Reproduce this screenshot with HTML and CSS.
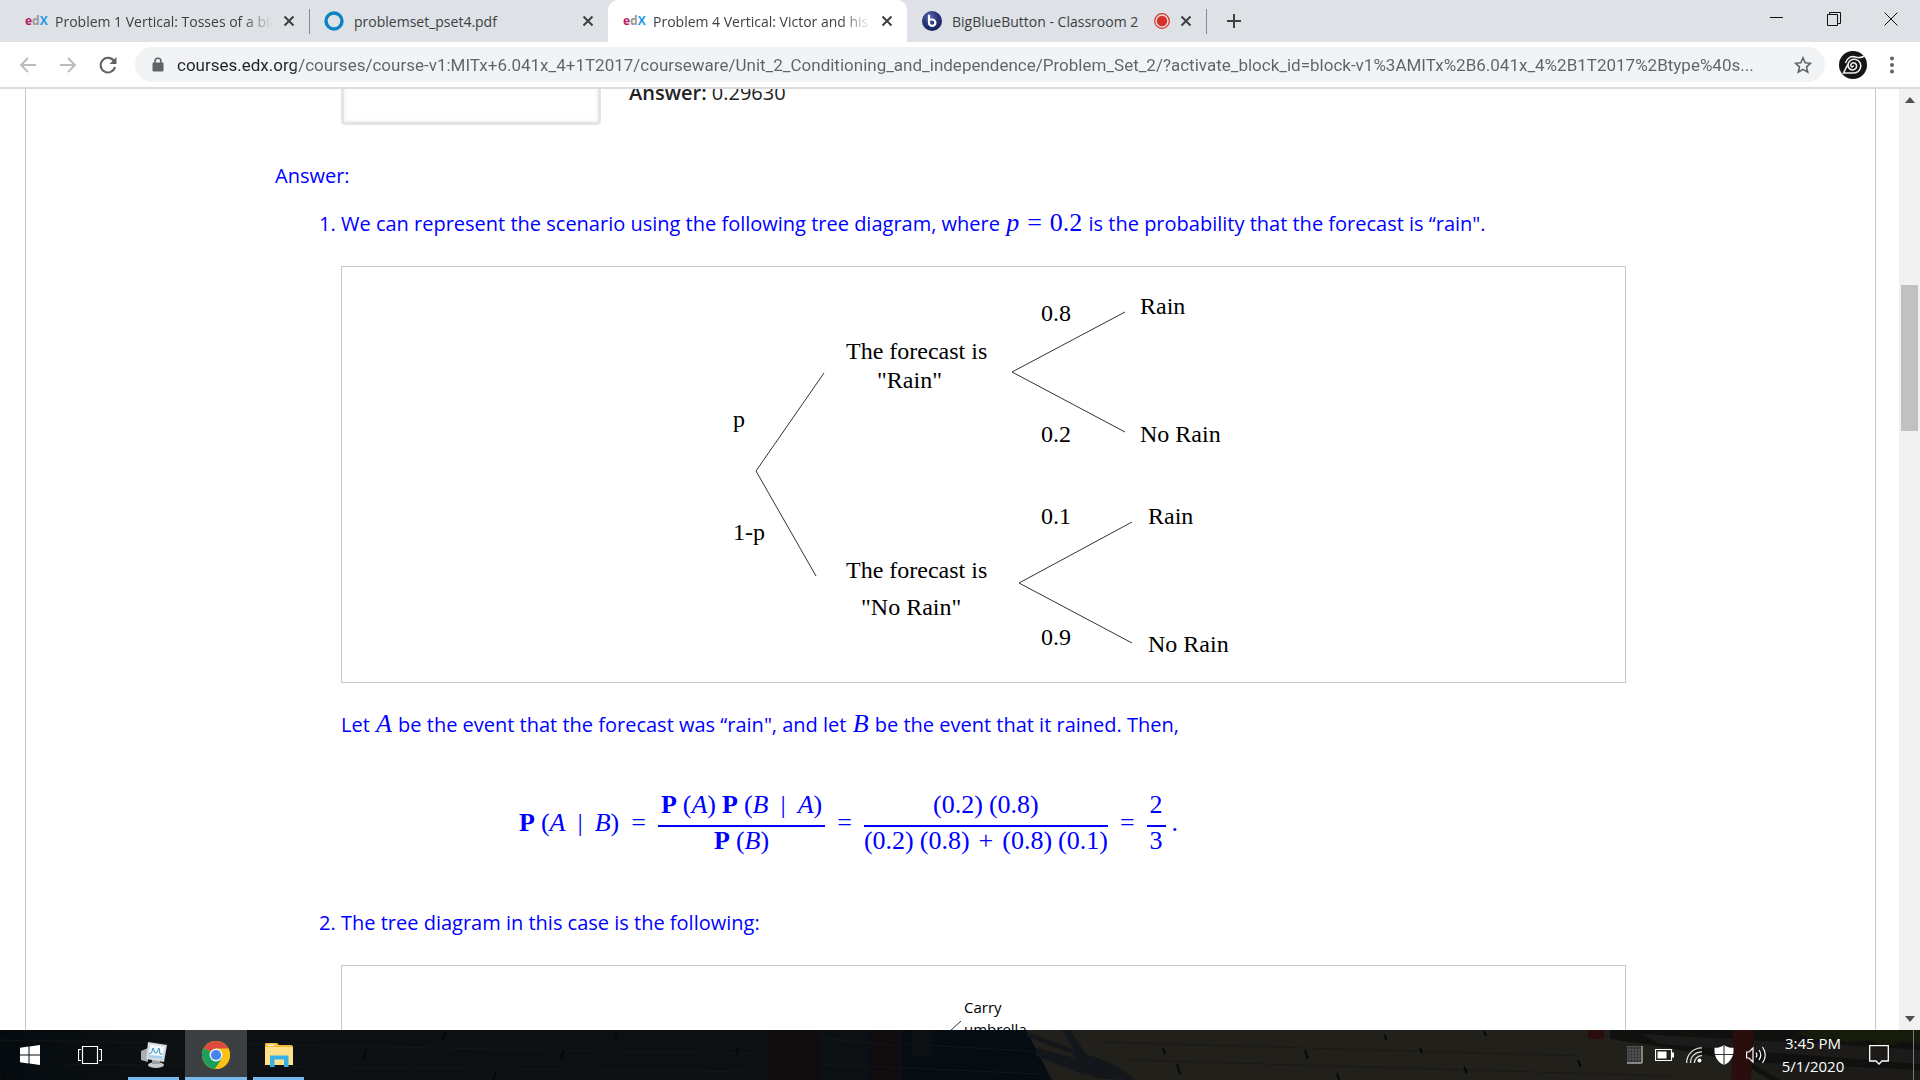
FILE: index.html
```html
<!DOCTYPE html>
<html lang="en">
<head>
<meta charset="utf-8">
<title>Problem 4 Vertical: Victor and his umbrella</title>
<link rel="stylesheet" href="styles.css">
</head>
<body>
<header class="browser">
  <div class="tabstrip">
    <div class="tab">
      <span class="edx"><b class="edx-e">e</b><b class="edx-d">d</b><b class="edx-x">X</b></span>
      <span class="tab-title fade">Problem 1 Vertical: Tosses of a biased coin</span>
      <button class="tab-close" aria-label="Close tab"><svg width="12" height="12" viewBox="0 0 12 12"><path d="M1.5 1.5l9 9M10.5 1.5l-9 9"/></svg></button>
    </div>
    <div class="tab divided">
      <svg class="favicon" width="20" height="20" viewBox="0 0 20 20"><circle cx="10" cy="10" r="8" fill="none" stroke="#0a85c2" stroke-width="3.4"/></svg>
      <span class="tab-title">problemset_pset4.pdf</span>
      <button class="tab-close" aria-label="Close tab"><svg width="12" height="12" viewBox="0 0 12 12"><path d="M1.5 1.5l9 9M10.5 1.5l-9 9"/></svg></button>
    </div>
    <div class="tab active">
      <span class="edx"><b class="edx-e">e</b><b class="edx-d">d</b><b class="edx-x">X</b></span>
      <span class="tab-title fade">Problem 4 Vertical: Victor and his umbrella</span>
      <button class="tab-close" aria-label="Close tab"><svg width="12" height="12" viewBox="0 0 12 12"><path d="M1.5 1.5l9 9M10.5 1.5l-9 9"/></svg></button>
    </div>
    <div class="tab">
      <svg class="favicon" width="20" height="20" viewBox="0 0 20 20"><defs><radialGradient id="bbb" cx=".4" cy=".3" r=".8"><stop offset="0" stop-color="#5a68b0"/><stop offset=".5" stop-color="#273379"/><stop offset="1" stop-color="#182058"/></radialGradient></defs><circle cx="10" cy="10" r="10" fill="url(#bbb)"/><path d="M7 4.5v7.2a3.2 3.2 0 1 0 3.2-3.2H7" fill="none" stroke="#fff" stroke-width="2.2" stroke-linecap="round"/></svg>
      <span class="tab-title">BigBlueButton - Classroom 2</span>
      <svg class="recording" width="16" height="16" viewBox="0 0 16 16"><circle cx="8" cy="8" r="7.3" fill="none" stroke="#d93025" stroke-width="1.2"/><circle cx="8" cy="8" r="5.2" fill="#d93025"/></svg>
      <button class="tab-close" aria-label="Close tab"><svg width="12" height="12" viewBox="0 0 12 12"><path d="M1.5 1.5l9 9M10.5 1.5l-9 9"/></svg></button>
    </div>
    <button class="new-tab" aria-label="New tab"><svg width="16" height="16" viewBox="0 0 16 16"><path d="M8 1v14M1 8h14" stroke="#3c4043" stroke-width="2"/></svg></button>
    <div class="window-controls">
      <button aria-label="Minimize"><svg width="14" height="14" viewBox="0 0 14 14"><path d="M0 5.5h13"/></svg></button>
      <button aria-label="Restore"><svg width="14" height="14" viewBox="0 0 14 14"><path d="M.5 2.5h10v11H.5zM2.500 2V.5h11v11H11"/></svg></button>
      <button aria-label="Close"><svg width="14" height="14" viewBox="0 0 14 14"><path d="M.5.5l13 13M13.500.5l-13 13"/></svg></button>
    </div>
  </div>
  <div class="toolbar">
    <button class="nav" aria-label="Back"><svg width="18" height="18" viewBox="0 0 18 18"><path d="M17 9H2.500M9 2L2 9l7 7" fill="none" stroke="#babcbe" stroke-width="2"/></svg></button>
    <button class="nav" aria-label="Forward"><svg width="18" height="18" viewBox="0 0 18 18"><path d="M1 9h14.500M9 2l7 7-7 7" fill="none" stroke="#babcbe" stroke-width="2"/></svg></button>
    <button class="nav" aria-label="Reload"><svg width="18" height="18" viewBox="0 0 18 18"><path d="M15.300 5.500A7.300 7.300 0 1 0 16 11" fill="none" stroke="#5f6368" stroke-width="2.100"/><path d="M17.500 1v7h-7z" fill="#5f6368"/></svg></button>
    <div class="omnibox">
      <svg width="12" height="16" viewBox="0 0 12 16"><path d="M3 6V4.200a3 3 0 0 1 6 0V6" fill="none" stroke="#5f6368" stroke-width="1.600"/><rect x=".5" y="5.500" width="11" height="9" rx="1.200" fill="#5f6368"/></svg>
      <input class="url" type="text" aria-label="Address" value="courses.edx.org/courses/course-v1:MITx+6.041x_4+1T2017/courseware/Unit_2_Conditioning_and_independence/Problem_Set_2/?activate_block_id=block-v1%3AMITx%2B6.041x_4%2B1T2017%2Btype%40s...">
      <button class="star" aria-label="Bookmark this page"><svg width="18" height="18" viewBox="0 0 18 18"><path d="M9 1.800l2.200 5 5.300.5-4 3.600 1.200 5.300L9 13.400l-4.700 2.800 1.200-5.300-4-3.600 5.300-.5z" fill="none" stroke="#5f6368" stroke-width="1.600"/></svg></button>
    </div>
    <button class="avatar" aria-label="Profile"><svg width="28" height="28" viewBox="0 0 28 28"><circle cx="14" cy="14" r="14" fill="#151515"/><path d="M14 14.500c.800 1.500-1.700 2-2.100.2-.5-2.200 2.200-3.700 4.200-2.500 2.400 1.500 1.800 5.300-.9 6.400-3.200 1.200-6.300-1.300-6.200-4.500.1-4 4-6.500 7.800-5.600 4 1 6 5.200 4.400 9-1.200 3-3.800 4.500-7 4.500H4.500L9 13" fill="none" stroke="#eee" stroke-width="1.600"/><path d="M6.500 12C8 7 12 4.800 16.500 6c2.500.8 5 1.500 9-1" fill="none" stroke="#eee" stroke-width="1.600"/></svg></button>
    <button class="menu" aria-label="Menu"><svg width="6" height="18" viewBox="0 0 6 18"><g fill="#5f6368"><circle cx="3" cy="2.500" r="2"/><circle cx="3" cy="9" r="2"/><circle cx="3" cy="15.500" r="2"/></g></svg></button>
  </div>
</header>

<div class="viewport">
  <main class="sheet">
    <div class="response">
      <input class="response-input" type="text" aria-label="Response">
      <p><b>Answer:</b> 0.29630</p>
    </div>
    <section class="solution">
      <p>Answer:</p>
      <ol class="steps">
        <li>
          <p>We can represent the scenario using the following tree diagram, where <span class="math relation"><i>p</i><span>=</span><span>0.2</span></span> is the probability that the forecast is “rain".</p>
          <figure class="figure">
            <svg width="600" height="415" viewBox="0 0 600 415" role="img" aria-label="Forecast tree">
              <g fill="none" stroke="#333" stroke-width="1">
                <path d="M140 106L72 204L132 309"/>
                <path d="M441 45L328 105L441 165"/>
                <path d="M448 255L335 316L448 376"/>
              </g>
              <g class="tree-text">
                <text x="49" y="160">p</text>
                <text x="49" y="273">1-p</text>
                <text x="162" y="92">The forecast is</text>
                <text x="193" y="121">"Rain"</text>
                <text x="162" y="311">The forecast is</text>
                <text x="177" y="348">"No Rain"</text>
                <text x="357" y="54">0.8</text>
                <text x="357" y="175">0.2</text>
                <text x="357" y="257">0.1</text>
                <text x="357" y="378">0.9</text>
                <text x="456" y="47">Rain</text>
                <text x="456" y="175">No Rain</text>
                <text x="464" y="257">Rain</text>
                <text x="464" y="385">No Rain</text>
              </g>
            </svg>
          </figure>
          <p>Let <i class="math">A</i> be the event that the forecast was “rain", and let <i class="math">B</i> be the event that it rained. Then,</p>
          <div class="equation">
            <span class="term"><b>P</b><span>(<i>A</i><span class="operator">|</span><i>B</i>)</span></span>
            <span>=</span>
            <span class="fraction">
              <span class="numerator term"><b>P</b><span>(<i>A</i>)</span><b>P</b><span>(<i>B</i><span class="operator">|</span><i>A</i>)</span></span>
              <span class="term"><b>P</b><span>(<i>B</i>)</span></span>
            </span>
            <span>=</span>
            <span class="fraction">
              <span class="numerator term"><span>(0.2)</span><span>(0.8)</span></span>
              <span class="term"><span>(0.2)</span><span>(0.8)</span><span class="plus">+</span><span>(0.8)</span><span>(0.1)</span></span>
            </span>
            <span>=</span>
            <span class="term"><span class="fraction"><span class="numerator">2</span><span>3</span></span>.</span>
          </div>
        </li>
        <li>
          <p>The tree diagram in this case is the following:</p>
          <figure class="figure">
            <svg width="600" height="415" viewBox="0 0 600 415" role="img" aria-label="Umbrella tree">
              <path d="M277 55L266 65L200 150" fill="none" stroke="#333"/>
              <g class="leaf-text">
                <text x="280" y="47">Carry</text>
                <text x="280" y="69">umbrella</text>
              </g>
            </svg>
          </figure>
        </li>
      </ol>
    </section>
  </main>
  <div class="scrollbar" aria-hidden="true">
    <svg width="10" height="6" viewBox="0 0 10 6"><path d="M0 6l5-6 5 6z" fill="#505050"/></svg>
    <div class="track"><div class="thumb"></div></div>
    <svg width="10" height="6" viewBox="0 0 10 6"><path d="M0 0l5 6 5-6z" fill="#505050"/></svg>
  </div>
</div>

<footer class="taskbar">
  <svg class="wallpaper" viewBox="0 0 1920 50" preserveAspectRatio="none" aria-hidden="true">
    <defs><linearGradient id="night"><stop offset="0" stop-color="#050b0f"/><stop offset=".15" stop-color="#0c1013"/><stop offset="1" stop-color="#0b1014"/></linearGradient></defs>
    <rect width="1100" height="50" fill="url(#night)"/>
    <path d="M902 0h128l20 50H902z" fill="#050c12"/>
    <path d="M769 0h50v50h-50zM870 0h28v50h-28z" fill="#100b0c"/>
    <path d="M912 0h20v26h-20z" fill="#0e0f11"/>
    <path d="M1026 0h894v50h-868z" fill="#22201b"/>
    <path d="M1026 6l46 18 22 24 30 2h12l-22-16-28-10-16-24h-8l12 20-46-18zM1036 26l46 18 24 2-24-16-46-12z" fill="#13161a"/>
    <path d="M1610 0h310v50h-150l-30-18-70-14-60-9z" fill="#10100f"/>
    <path d="M1640 4l220 12 60 4v14l-260-20zM1750 32l170 8v10h-140z" fill="#1c1b1a"/>
    <path d="M1588 0h16v9h-16zM1733 0h21l-3 50h-20z" fill="#2a0e0d"/>
    <path d="M1796 2l22-2h102v14l-18-3-16 6-18-7-20 3-18-5-18 2z" fill="#151c0c"/>
    <g fill="none" stroke="#12171a" stroke-width="1"><path d="M0 10l770 14M60 34l700 8M820 8l80 8M905 14l140 8M820 34l220 10"/></g>
    <g fill="none" stroke="#1b1a15"><path d="M1100 12l480 14M1130 30l540 16"/></g>
    <g fill="none" stroke="#060808" stroke-width="2"><path d="M446 2l-4 8M367 19l-4 9M564 20l-3 8M496 42l-3 8M7 42l-5 6M616 2l-1 6M738 18l-2 8M1163 18l2 6M1177 34l3 10M1305 20l3 9M1385 5l1 5M1484 1l2 5M1420 18l2 5M1578 30l3 7M1464 37l3 6M1337 43l2 7"/></g>
  </svg>
  <nav class="apps" aria-label="Taskbar">
    <button aria-label="Start"><svg width="20" height="20" viewBox="0 0 20 20"><path d="M0 2.800l8.500-1.200v7.900H0zM9.500 1.500L20 0v9.500H9.500zM0 10.500h8.500v7.900L0 17.200zM9.500 10.500H20V20L9.500 18.500z" fill="#fff"/></svg></button>
    <button aria-label="Task View"><svg width="24" height="18" viewBox="0 0 24 18"><path d="M4.500.500h15v17h-15zM3 3.500H.500v11H3M21 3.500h2.500v11H21" fill="none" stroke="#fff" stroke-width="1.200"/></svg></button>
    <button class="open" aria-label="Resource Monitor"><svg width="28" height="26" viewBox="0 0 28 26"><path d="M1 9l7-3v14l-7-2z" fill="#a9adb0"/><ellipse cx="16" cy="23" rx="8" ry="3" fill="#c8cacb"/><path d="M12 17h8v5h-8z" fill="#9b9fa1"/><path d="M8 0l19 3-3 17-18-3z" fill="#d6d8d9"/><path d="M10 2.500l14.500 2.300-2.300 12.400L8.500 15z" fill="#f3f9fd"/><path d="M8.700 12l2.800-1 1.500-5 2 5 2-.5L19 6l1 6 2.500 0" fill="none" stroke="#3e93c7" stroke-width="1"/><path d="M9 13l13.500 1-.5 3L8.500 15z" fill="#9fcdeb"/></svg></button>
    <button class="open current" aria-label="Chrome"><svg width="28" height="28" viewBox="0 0 28 28"><circle cx="14" cy="14" r="14" fill="#fbc116"/><path d="M14 14L1.900 7A14 14 0 0 1 26.100 7z" fill="#dc4a3c"/><path d="M26.100 7H14v7z" fill="#dc4a3c"/><path d="M1.900 7A14 14 0 0 0 13 27.960L20 17.500 14 14z" fill="#1a9f5c"/><path d="M13 28l7-10.500L14 14l13.900-1A14 14 0 0 1 13 28z" fill="#fbc116"/><path d="M14 14V7.500h12.400A14 14 0 0 1 28 14z" fill="#fbc116"/><circle cx="14" cy="14" r="6.500" fill="#f4f4f4"/><circle cx="14" cy="14" r="5.100" fill="#4485f0"/></svg></button>
    <button class="open" aria-label="File Explorer"><svg width="28" height="24" viewBox="0 0 28 24"><path d="M0 1a1 1 0 0 1 1-1h11l2 2h12a2 2 0 0 1 2 2v18H0z" fill="#f5b82e"/><path d="M0 4h28v18H0z" fill="#ffe08a"/><path d="M2.500 1.500h7V3h-7z" fill="#e9f8ff"/><path d="M5 12.500h18.500V24H19v-7.500h-9.500V24H5z" fill="#35b1e6"/></svg></button>
  </nav>
  <div class="tray">
    <svg width="16" height="18" viewBox="0 0 16 18"><path d="M0 0h15v17H0z" fill="#2b2b2b" stroke="#777"/><path d="M3 1v16M6 1v16M9 1v16M12 1v16M1 4h13M1 7h13M1 10h13M1 13h13" stroke="#666" stroke-width=".8"/><path d="M15 0v17H0" fill="none" stroke="#bbb"/></svg>
    <svg width="19" height="12" viewBox="0 0 19 12"><path d="M.500.500h16v11H.500z" fill="none" stroke="#fff" stroke-width="1.200"/><path d="M2.500 2.500h9v7h-9zM17 3.500h2v5h-2z" fill="#fff"/></svg>
    <svg width="16" height="16" viewBox="0 0 16 16"><g fill="none" stroke="#ddd" stroke-width="1.300"><path d="M.7 16A15 15 0 0 1 16 .8M4.500 16A11 11 0 0 1 16 4.800M8.300 16A7.500 7.500 0 0 1 16 8.600"/></g><circle cx="13.500" cy="13.500" r="2" fill="#fff"/></svg>
    <svg width="20" height="20" viewBox="0 0 20 20"><path d="M10 0c2.500 2 6 3 9.500 2.800C20 11 17 17 10 20 3 17 0 11 .500 2.800 4 3 7.500 2 10 0z" fill="#fff"/><path d="M10 0v20M0 9.500h20" stroke="#333" stroke-width="1.100"/></svg>
    <svg width="21" height="18" viewBox="0 0 21 18"><g fill="none" stroke="#fff" stroke-width="1.200"><path d="M.600 6H3l4-4v14l-4-4H.600z"/><path d="M10 6.500q1.800 2.500 0 5" /><path d="M13 4q3.500 5 0 10"/><path d="M16.500 1q5.500 8 0 16"/></g></svg>
    <button class="clock"><time>3:45 PM</time><time>5/1/2020</time></button>
    <button class="notes" aria-label="Notifications"><svg width="20" height="20" viewBox="0 0 20 20"><path d="M.700.700h18.600v15.300H13l-3 3-3-3H.700z" fill="none" stroke="#fff" stroke-width="1.300"/></svg></button>
  </div>
</footer>
</body>
</html>
```
FILE: styles.css
```css
* { box-sizing: border-box; }

body {
  margin: 0;
  height: 100vh;
  display: flex;
  flex-direction: column;
  overflow: hidden;
  background: #fff;
  font-family: "Open Sans", "Noto Sans", sans-serif;
}

p, figure, ol { margin: 0; }

button {
  display: flex;
  align-items: center;
  justify-content: center;
  padding: 0;
  border: 0;
  background: none;
  font: inherit;
  color: inherit;
}

svg { display: block; flex: none; }

/* Browser frame */
.tabstrip {
  display: flex;
  align-items: stretch;
  height: 42px;
  padding: 0 1px 0 10px;
  background: #dee1e6;
  color: #3c4043;
}

.tab {
  position: relative;
  display: flex;
  align-items: center;
  gap: 10px;
  width: 299px;
  padding: 0 14px 0 15px;
  font-size: 14px;
}

.tab.divided::before,
.new-tab::before {
  content: "";
  position: absolute;
  left: 0;
  top: 9px;
  width: 1px;
  height: 25px;
  background: #85888c;
}

.tab.active {
  background: #fff;
  border-radius: 10px 10px 0 0;
}

.tab-title {
  flex: 1;
  overflow: hidden;
  white-space: nowrap;
}

.fade {
  -webkit-mask-image: linear-gradient(to right, #000 86%, transparent);
  mask-image: linear-gradient(to right, #000 86%, transparent);
}

.tab-close svg { stroke: #3c4043; stroke-width: 2; fill: none; }

.edx {
  display: flex;
  width: 20px;
  font-size: 12px;
  line-height: 16px;
}
.edx-e { color: #b5205f; }
.edx-d { color: #96999c; }
.edx-x { color: #1f9be8; }

.new-tab {
  position: relative;
  width: 56px;
}

.window-controls {
  display: flex;
  margin-left: auto;
  align-self: flex-start;
}
.window-controls button { width: 57px; height: 38px; }
.window-controls svg { fill: none; stroke: #111; stroke-width: 1; }

.toolbar {
  display: flex;
  align-items: center;
  height: 47px;
  padding: 0 25px 0 8px;
  border-bottom: 2px solid #dadce0;
  background: #fff;
}
.nav { width: 40px; height: 35px; }

.omnibox {
  flex: 1;
  display: flex;
  align-items: center;
  gap: 13px;
  height: 35px;
  margin-left: 7px;
  padding: 0 13px 0 17px;
  border-radius: 18px;
  background: #f1f3f4;
}

.url {
  flex: 1;
  min-width: 0;
  padding: 0;
  border: 0;
  font: 17px/24px Roboto, "Noto Sans", sans-serif;
  background: linear-gradient(to right, #202124 119px, #5f6368 119px);
  -webkit-background-clip: text;
  background-clip: text;
  color: transparent;
}

.avatar { margin-left: 14px; }
.menu { margin-left: 22px; }

/* Page */
.viewport {
  flex: 1;
  min-height: 0;
  display: flex;
  overflow: hidden;
}

.sheet {
  flex: 1;
  margin: -28px 23px 0 25px;
  padding: 0 249px;
  border: solid #c8c8c8;
  border-width: 0 1px;
  font-size: 20px;
  line-height: 32px;
  color: #222;
}

.response {
  display: flex;
  align-items: center;
  gap: 28px;
  padding-left: 66px;
}
.response b { font-weight: 600; }

.response-input {
  width: 260px;
  height: 64px;
  border: 3px solid #e4e4e4;
  border-radius: 4px;
  background: #fff;
  box-shadow: inset 0 0 4px #e8e8e8;
}

.solution {
  padding-top: 35px;
  color: #00f;
}

.steps {
  padding: 16px 0 0 66px;
}

.figure {
  display: flex;
  justify-content: center;
  margin: 26px 0;
  border: 1px solid #c8c8c8;
  background: #fff;
}

.tree-text { font: 24px "Liberation Serif", serif; fill: #000; }
.leaf-text { font: 15px "Open Sans", sans-serif; fill: #000; }

.math {
  padding: 0 1px;
  font-family: "Liberation Serif", serif;
  font-size: 26px;
  line-height: 24px;
}
.relation { display: inline-flex; gap: 8px; }

.equation {
  display: flex;
  align-items: center;
  gap: 12px;
  padding: 50px 0 52px 178px;
  font: 26px/28px "Liberation Serif", serif;
}

.term { display: flex; align-items: center; gap: 6px; }
.operator { margin: 0 12px; }
.plus { margin: 0 3px; }

.fraction {
  display: flex;
  flex-direction: column;
  align-items: center;
}

.numerator {
  align-self: stretch;
  justify-content: center;
  padding: 0 3px 6px;
  border-bottom: 2px solid #00f;
}

.scrollbar {
  width: 21px;
  display: flex;
  flex-direction: column;
  align-items: center;
  padding: 8px 0;
  background: #f1f1f1;
}
.track { flex: 1; align-self: stretch; padding: 182px 2px 0; }
.thumb { height: 146px; background: #c1c1c1; }

/* Taskbar */
.taskbar {
  position: relative;
  display: flex;
  justify-content: space-between;
  height: 50px;
  background: #0b1014;
  color: #fff;
}

.wallpaper {
  position: absolute;
  inset: 0;
  width: 100%;
  height: 100%;
}

.apps, .tray { position: relative; display: flex; }
.apps button { width: 60px; }
.apps button:nth-child(2) { margin-right: 3px; }

.apps .open {
  width: 51px;
  margin: 0 5px;
  border-top: 3px solid transparent;
  border-bottom: 3px solid #76b9ed;
}
.apps .current {
  width: 62px;
  margin: 0 1px;
  border-top-color: #3d4042;
  background: #3d4042;
}

.tray {
  align-items: center;
  gap: 12px;
  padding-right: 6px;
}
.tray::after {
  content: "";
  align-self: stretch;
  width: 1px;
  margin-left: 12px;
  background: #777;
}

.clock {
  flex-direction: column;
  width: 68px;
  font-size: 15px;
  line-height: 23px;
}
.notes { margin-left: 10px; }
```
